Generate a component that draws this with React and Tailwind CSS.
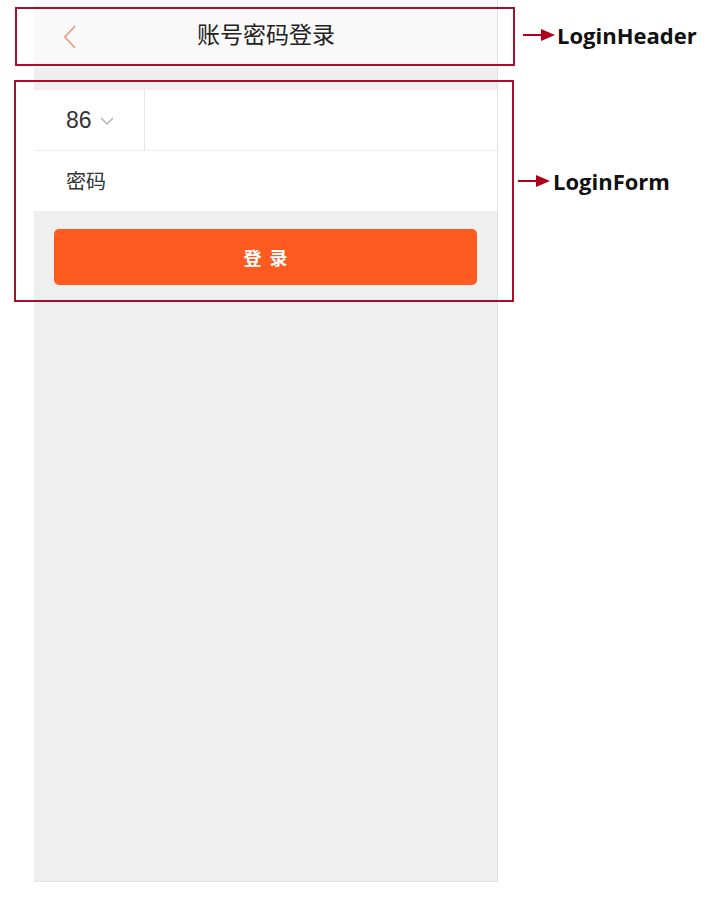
import React from "react";

function Arrow() {
  return (
    <svg width="32" height="12" viewBox="0 0 32 12">
      <line x1="0" y1="6" x2="20" y2="6" stroke="#b0001a" strokeWidth="2" />
      <polygon points="18,0 32,6 18,12" fill="#b0001a" />
    </svg>
  );
}

export default function App() {
  return (
    <div className="relative w-[717px] h-[920px] bg-white overflow-hidden" style={{ fontFamily: '"Noto Sans CJK SC", "Noto Sans", sans-serif' }}>
      <div className="ml-[34px] w-[464px] h-[882px] bg-[#efefef] border-r border-b border-[#e2e2e2] flex flex-col">
        <div className="h-[68px] bg-[#f9f9f9] relative flex items-center justify-center">
          <svg className="absolute left-[28px] top-[24px]" width="16" height="26" viewBox="0 0 16 26">
            <polyline points="13,2 3,13 13,24" fill="none" stroke="#e69a7c" strokeWidth="1.6" />
          </svg>
          <span className="text-[23px] text-[#222] -mt-[1px] ml-[1px]">账号密码登录</span>
        </div>
        <div className="h-[22px]" />
        <div className="bg-white">
          <div className="h-[61px] flex border-b border-[#ececec]">
            <div className="w-[111px] border-r border-[#e6e6e6] flex items-center pl-[32px] gap-[8px]">
              <span className="text-[23px] text-[#333]" style={{ fontFamily: '"Liberation Sans", Arial, sans-serif' }}>86</span>
              <svg width="14" height="9" viewBox="0 0 14 9" className="mt-[3px]">
                <polyline points="1,1 7,7 13,1" fill="none" stroke="#b5b5b5" strokeWidth="1.5" />
              </svg>
            </div>
            <div className="flex-1" />
          </div>
          <div className="h-[60px] flex items-center pl-[32px]">
            <span className="text-[20px] text-[#333]">密码</span>
          </div>
        </div>
        <div className="px-[20px] pt-[18px]">
          <div className="h-[56px] rounded-[5px] bg-[#ff5a1f] flex items-center justify-center">
            <span className="text-white text-[18px] font-bold tracking-[8px] pl-[8px]">登录</span>
          </div>
        </div>
      </div>

      {/* annotations */}
      <div className="absolute left-[15px] top-[7px] w-[500px] h-[59px] border-2 border-[#a3122a] pointer-events-none" />
      <div className="absolute left-[14px] top-[80px] w-[500px] h-[222px] border-2 border-[#a3122a] pointer-events-none" />
      <div className="absolute left-[523px] top-[29px]"><Arrow /></div>
      <div className="absolute left-[518px] top-[175px]"><Arrow /></div>
      <div className="absolute left-[557px] top-[19px] text-[22px] font-bold text-[#111] leading-[32px]" style={{ fontFamily: '"Open Sans", Lato, sans-serif' }}>LoginHeader</div>
      <div className="absolute left-[553px] top-[165px] text-[22px] font-bold text-[#111] leading-[32px]" style={{ fontFamily: '"Open Sans", Lato, sans-serif' }}>LoginForm</div>
    </div>
  );
}
